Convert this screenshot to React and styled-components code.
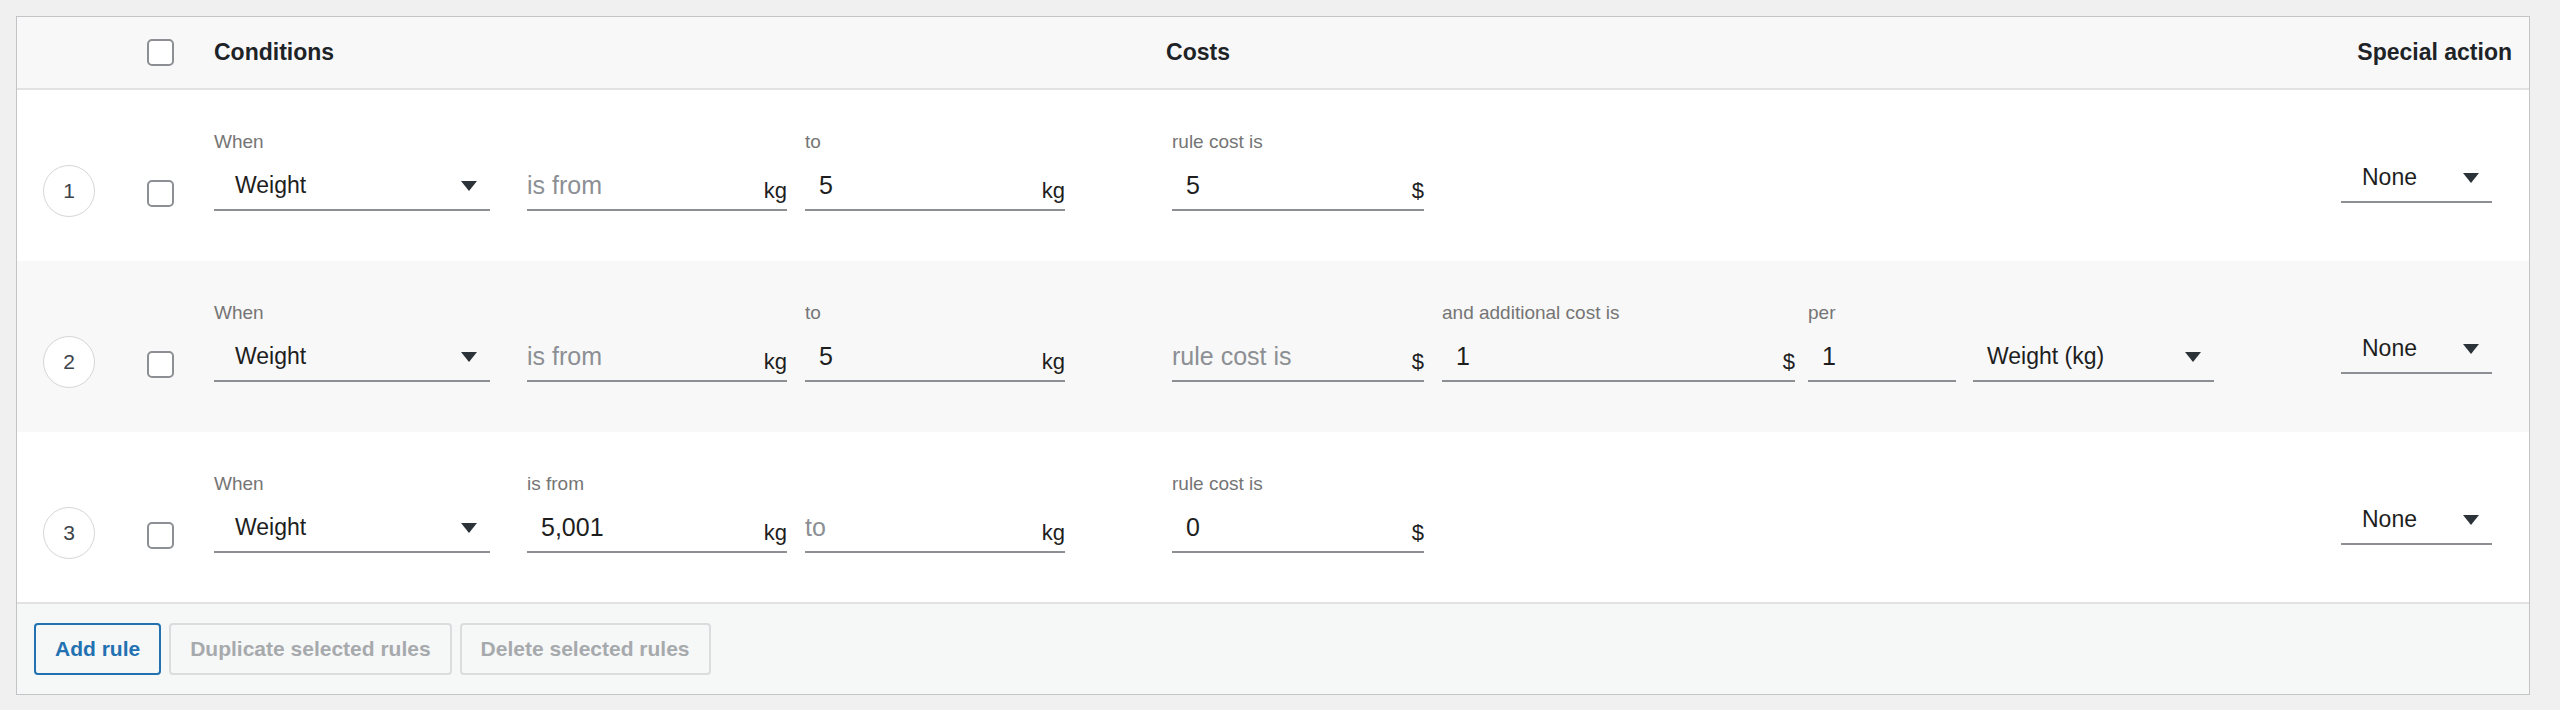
import React from 'react';
import styled, { createGlobalStyle } from 'styled-components';

const GlobalStyle = createGlobalStyle`
  body {
    margin: 0;
    background: #f0f0f1;
    font-family: 'Liberation Sans', Arial, sans-serif;
  }
`;

const Page = styled.div`
  padding: 16px 32px 16px 16px;
  height: 710px;
  box-sizing: border-box;
`;

const Table = styled.div`
  border: 1px solid #c3c4c7;
  background: #fff;
  width: 2512px;
`;

const HeaderRow = styled.div`
  display: flex;
  align-items: center;
  height: 71px;
  background: #f8f8f8;
  border-bottom: 2px solid #e2e2e2;
`;

const HeaderTitle = styled.div`
  font-size: 23px;
  font-weight: 700;
  color: #1d2327;
  margin-left: ${p => p.$ml || 0}px;
  margin-right: ${p => p.$mr || 0}px;
`;

const Row = styled.div`
  display: flex;
  align-items: flex-start;
  box-sizing: border-box;
  height: ${p => p.$h || 171}px;
  padding-top: 40px;
  background: ${p => (p.$alt ? '#f8f8f8' : '#fff')};
`;

const Num = styled.div`
  width: 104px;
  display: flex;
  justify-content: center;
  margin-top: 35px;
`;

const Circle = styled.div`
  width: 50px;
  height: 50px;
  border: 1px solid #d6d6d6;
  border-radius: 50%;
  display: flex;
  align-items: center;
  justify-content: center;
  font-size: 21px;
  color: #3c434a;
  background: #fff;
`;

const Check = styled.div`
  width: 23px;
  height: 23px;
  border: 2px solid #8c8f94;
  border-radius: 5px;
  background: #fff;
  flex-shrink: 0;
  margin-left: ${p => p.$ml || 0}px;
  margin-top: ${p => p.$mt || 0}px;
`;

const Field = styled.div`
  width: ${p => p.$w}px;
  margin-left: ${p => p.$ml || 0}px;
  margin-right: ${p => p.$mr || 0}px;
  margin-top: ${p => p.$mt || 0}px;
  flex-shrink: 0;
`;

const Label = styled.div`
  height: 24px;
  line-height: 24px;
  font-size: 19px;
  color: #757575;
  margin-bottom: 8px;
  white-space: nowrap;
`;

const Input = styled.div`
  height: 47px;
  border-bottom: 2px solid #8c8f94;
  display: flex;
  align-items: center;
  justify-content: space-between;
  box-sizing: content-box;
`;

const Value = styled.span`
  font-size: 25px;
  color: ${p => (p.$placeholder ? '#8c8f94' : '#1e1e1e')};
  padding-left: ${p => (p.$placeholder ? 0 : 14)}px;
`;

const Unit = styled.span`
  font-size: 22px;
  color: #1e1e1e;
  margin-top: 10px;
`;

const SelectText = styled.span`
  font-size: 23px;
  color: #1e1e1e;
  padding-left: ${p => p.$pl ?? 21}px;
`;

const Arrow = styled.span`
  width: 0;
  height: 0;
  border-left: 8px solid transparent;
  border-right: 8px solid transparent;
  border-top: 10px solid #2c3338;
  margin-right: ${p => p.$mr ?? 13}px;
`;

const Footer = styled.div`
  display: flex;
  gap: 8px;
  height: 92px;
  box-sizing: border-box;
  padding: 19px 0 0 17px;
  background: #f6f7f7;
  border-top: 2px solid #e2e2e2;
`;

const Button = styled.div`
  height: 52px;
  box-sizing: border-box;
  padding: 0 19px;
  display: flex;
  align-items: center;
  border-radius: 4px;
  font-size: 21px;
  font-weight: 700;
  background: #f6f7f7;
  color: ${p => (p.$disabled ? '#a7aaad' : '#2271b1')};
  border: 2px solid ${p => (p.$disabled ? '#dcdcde' : '#2271b1')};
`;

const TextField = ({ label, value, placeholder, unit, ...rest }) => (
  <Field {...rest}>
    <Label>{label || '\u00a0'}</Label>
    <Input>
      {value ? <Value>{value}</Value> : <Value $placeholder>{placeholder}</Value>}
      {unit && <Unit>{unit}</Unit>}
    </Input>
  </Field>
);

const SelectField = ({ label, value, pl, ...rest }) => (
  <Field {...rest}>
    {label !== null && <Label>{label || '\u00a0'}</Label>}
    <Input>
      <SelectText $pl={pl}>{value}</SelectText>
      <Arrow />
    </Input>
  </Field>
);

const Special = () => (
  <Field $w={151} $ml={0} $mt={24} style={{ marginLeft: 'auto', marginRight: 37 }}>
    <Input>
      <SelectText $pl={21}>None</SelectText>
      <Arrow />
    </Input>
  </Field>
);

const Lead = ({ n }) => (
  <>
    <Num>
      <Circle>{n}</Circle>
    </Num>
    <Check $ml={26} $mt={50} />
  </>
);

const App = () => (
  <>
    <GlobalStyle />
    <Page>
      <Table>
        <HeaderRow>
          <Check $ml={130} />
          <HeaderTitle $ml={40}>Conditions</HeaderTitle>
          <HeaderTitle $ml={832}>Costs</HeaderTitle>
          <HeaderTitle style={{ marginLeft: 'auto' }} $mr={17}>Special action</HeaderTitle>
        </HeaderRow>

        <Row>
          <Lead n={1} />
          <SelectField $w={276} $ml={40} label="When" value="Weight" />
          <TextField $w={260} $ml={37} placeholder="is from" unit="kg" />
          <TextField $w={260} $ml={18} label="to" value="5" unit="kg" />
          <TextField $w={252} $ml={107} label="rule cost is" value="5" unit="$" />
          <Special />
        </Row>

        <Row $alt>
          <Lead n={2} />
          <SelectField $w={276} $ml={40} label="When" value="Weight" />
          <TextField $w={260} $ml={37} placeholder="is from" unit="kg" />
          <TextField $w={260} $ml={18} label="to" value="5" unit="kg" />
          <TextField $w={252} $ml={107} placeholder="rule cost is" unit="$" />
          <TextField $w={353} $ml={18} label="and additional cost is" value="1" unit="$" />
          <TextField $w={148} $ml={13} label="per" value="1" />
          <SelectField $w={241} $ml={17} label="" value="Weight (kg)" pl={14} />
          <Special />
        </Row>

        <Row $h={170}>
          <Lead n={3} />
          <SelectField $w={276} $ml={40} label="When" value="Weight" />
          <TextField $w={260} $ml={37} label="is from" value="5,001" unit="kg" />
          <TextField $w={260} $ml={18} placeholder="to" unit="kg" />
          <TextField $w={252} $ml={107} label="rule cost is" value="0" unit="$" />
          <Special />
        </Row>

        <Footer>
          <Button>Add rule</Button>
          <Button $disabled>Duplicate selected rules</Button>
          <Button $disabled>Delete selected rules</Button>
        </Footer>
      </Table>
    </Page>
  </>
);

export default App;
